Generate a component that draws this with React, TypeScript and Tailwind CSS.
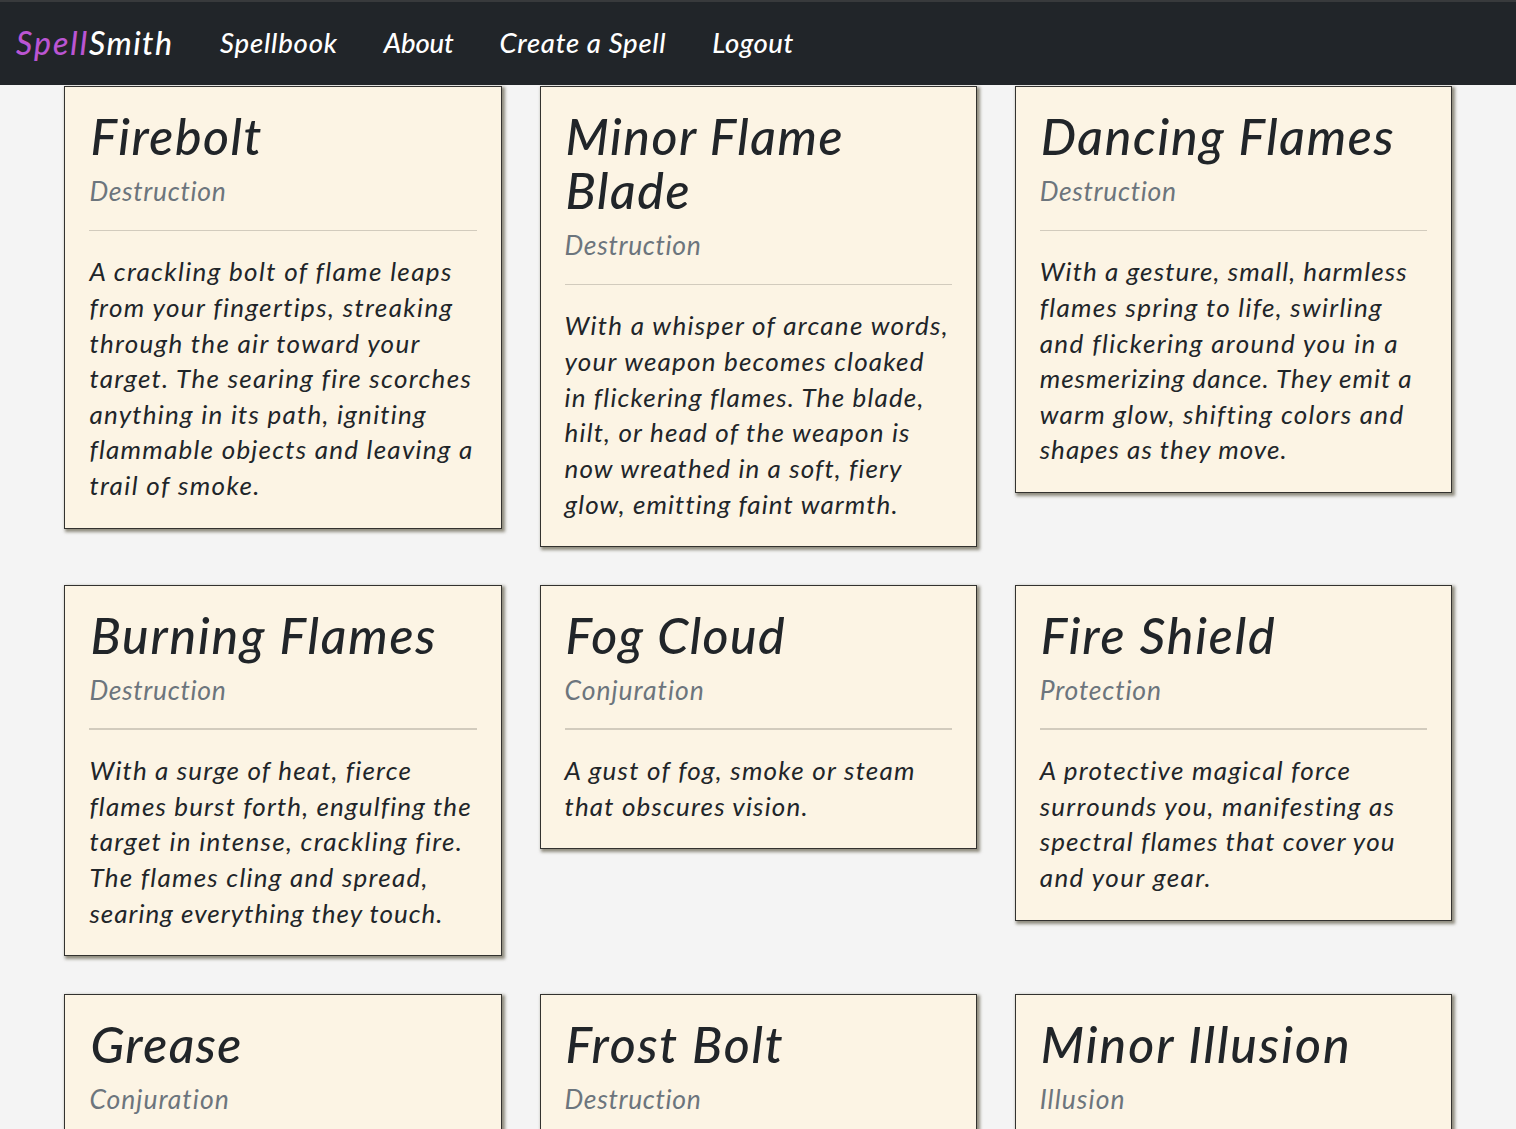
import { useLayoutEffect, useRef } from "react";

type Line = [text: string, width: number];

type Spell = {
  title: Line[];
  school: Line;
  body: Line[];
};

/* A single line of text whose tracking is adjusted to fill the given width. */
function Fit({ line, className = "" }: { line: Line; className?: string }) {
  const ref = useRef<HTMLSpanElement>(null);
  const [text, width] = line;
  useLayoutEffect(() => {
    const el = ref.current;
    if (!el) return;
    el.style.letterSpacing = "0px";
    const natural = el.getBoundingClientRect().width;
    el.style.letterSpacing = `${(width - natural) / (text.length - 1)}px`;
  }, [text, width]);
  return (
    <span ref={ref} className={`inline-block whitespace-pre ${className}`}>
      {text}
    </span>
  );
}

const spells: Spell[] = [
  {
    title: [["Firebolt", 171]],
    school: ["Destruction", 136],
    body: [
      ["A crackling bolt of flame leaps", 362],
      ["from your fingertips, streaking", 362],
      ["through the air toward your", 330],
      ["target. The searing fire scorches", 381],
      ["anything in its path, igniting", 336],
      ["flammable objects and leaving a", 383],
      ["trail of smoke.", 170],
    ],
  },
  {
    title: [["Minor Flame", 277], ["Blade", 124]],
    school: ["Destruction", 136],
    body: [
      ["With a whisper of arcane words,", 383],
      ["your weapon becomes cloaked", 359],
      ["in flickering flames. The blade,", 359],
      ["hilt, or head of the weapon is", 345],
      ["now wreathed in a soft, fiery", 336],
      ["glow, emitting faint warmth.", 331],
    ],
  },
  {
    title: [["Dancing Flames", 353]],
    school: ["Destruction", 136],
    body: [
      ["With a gesture, small, harmless", 367],
      ["flames spring to life, swirling", 342],
      ["and flickering around you in a", 358],
      ["mesmerizing dance. They emit a", 372],
      ["warm glow, shifting colors and", 363],
      ["shapes as they move.", 247],
    ],
  },
  {
    title: [["Burning Flames", 345]],
    school: ["Destruction", 136],
    body: [
      ["With a surge of heat, fierce", 321],
      ["flames burst forth, engulfing the", 381],
      ["target in intense, crackling fire.", 372],
      ["The flames cling and spread,", 338],
      ["searing everything they touch.", 353],
    ],
  },
  {
    title: [["Fog Cloud", 219]],
    school: ["Conjuration", 139],
    body: [
      ["A gust of fog, smoke or steam", 350],
      ["that obscures vision.", 243],
    ],
  },
  {
    title: [["Fire Shield", 234]],
    school: ["Protection", 121],
    body: [
      ["A protective magical force", 310],
      ["surrounds you, manifesting as", 354],
      ["spectral flames that cover you", 355],
      ["and your gear.", 171],
    ],
  },
  { title: [["Grease", 151]], school: ["Conjuration", 139], body: [] },
  { title: [["Frost Bolt", 217]], school: ["Destruction", 136], body: [] },
  { title: [["Minor Illusion", 309]], school: ["Illusion", 85], body: [] },
];

function Card({ spell }: { spell: Spell }) {
  return (
    <article className="border border-[#33322f] bg-[#fcf4e4] px-6 pt-[22px] pb-6 shadow-[2px_2px_3px_1px_rgba(60,55,30,0.55)]">
      <h2 className="pl-px text-[50px] leading-[54.2px] font-medium">
        {spell.title.map((line) => (
          <span key={line[0]} className="block h-[54.2px]">
            <Fit line={line} />
          </span>
        ))}
      </h2>
      <p className="mt-[10.5px] h-[35.6px] text-[26.5px] leading-[35.6px] text-[#6c757d]">
        <Fit line={spell.school} />
      </p>
      <hr className="mt-[20.3px] mb-[23.2px] h-[1.5px] border-0 bg-[#d2cbbd]" />
      <div className="text-[26px] leading-[35.65px]">
        {spell.body.map((line) => (
          <span key={line[0]} className="block h-[35.65px]">
            <Fit line={line} />
          </span>
        ))}
      </div>
    </article>
  );
}

const links: Line[] = [
  ["Spellbook", 117],
  ["About", 70],
  ["Create a Spell", 166],
  ["Logout", 81],
];

export default function App() {
  return (
    <div className="h-[1129px] overflow-hidden bg-[#f4f4f4] font-['Lato','Open_Sans',sans-serif] text-[#212529] italic">
      <nav className="flex h-[85px] items-center border-t-2 border-[#383a3c] bg-[#212529] pb-0.5 pl-4 text-white">
        <a className="mr-12 flex w-[156px] text-[32px] leading-10 font-medium">
          <Fit line={["Spell", 71]} className="text-[#ba55d3]" />
          <Fit line={["Smith", 83]} />
        </a>
        <div className="flex gap-[46px] text-[27.5px] leading-9 font-medium">
          {links.map((line) => (
            <a key={line[0]}>
              <Fit line={line} />
            </a>
          ))}
        </div>
      </nav>
      <main className="mt-px ml-[64.4px] grid w-[1387.8px] grid-cols-3 items-start gap-x-[37.6px] gap-y-[37.6px]">
        {spells.map((spell) => (
          <Card key={spell.title[0][0]} spell={spell} />
        ))}
      </main>
    </div>
  );
}
